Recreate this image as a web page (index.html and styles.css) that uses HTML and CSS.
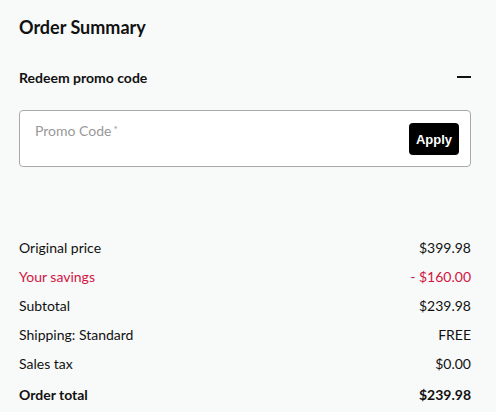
FILE: index.html
```html
<!DOCTYPE html>
<html>
<head>
<meta charset="utf-8">
<link rel="stylesheet" href="styles.css">
</head>
<body>
<div class="summary">
  <h2 class="title">Order Summary</h2>
  <div class="promo-head">
    <span class="promo-label">Redeem promo code</span>
    <span class="minus"></span>
  </div>
  <div class="promo-box">
    <span class="placeholder">Promo Code<span class="req">*</span></span>
    <button class="apply">Apply</button>
  </div>
  <div class="rows">
    <div class="row"><span>Original price</span><span>$399.98</span></div>
    <div class="row savings"><span>Your savings</span><span>- $160.00</span></div>
    <div class="row"><span>Subtotal</span><span>$239.98</span></div>
    <div class="row"><span>Shipping: Standard</span><span>FREE</span></div>
    <div class="row"><span>Sales tax</span><span>$0.00</span></div>
    <div class="row total"><span>Order total</span><span>$239.98</span></div>
  </div>
</div>
</body>
</html>
```
FILE: styles.css
```css
html, body {
  margin: 0;
  padding: 0;
  background: #f8f9f9;
}
body {
  font-family: "Lato", "Liberation Sans", sans-serif;
  color: #111;
}
.summary {
  padding: 16px 25px 0 19px;
}
.title {
  margin: 0;
  font-size: 18px;
  font-weight: 700;
  line-height: 22px;
}
.promo-head {
  display: flex;
  justify-content: space-between;
  align-items: center;
  margin-top: 28px;
  height: 22px;
}
.promo-label {
  font-size: 14px;
  font-weight: 700;
}
.minus {
  width: 14px;
  height: 2px;
  background: #111;
}
.promo-box {
  margin-top: 22px;
  height: 55px;
  border: 1px solid #aaa;
  border-radius: 4px;
  background: #fff;
  display: flex;
  justify-content: space-between;
  align-items: flex-start;
  padding: 0 11px 0 15px;
}
.placeholder {
  margin-top: 11px;
  font-size: 14px;
  color: #999;
}
.req {
  font-size: 10px;
  vertical-align: 3px;
  margin-left: 2px;
}
.apply {
  margin-top: 12px;
  width: 50px;
  height: 32px;
  background: #000;
  color: #fff;
  border: none;
  border-radius: 4px;
  font-family: "Liberation Sans", Arial, sans-serif;
  font-weight: 700;
  font-size: 13px;
  padding: 0;
}
.rows {
  margin-top: 72px;
  display: flex;
  flex-direction: column;
  gap: 11px;
}
.row {
  display: flex;
  justify-content: space-between;
  font-size: 14px;
  line-height: 18px;
}
.savings {
  color: #d21543;
}
.total {
  font-weight: 700;
  margin-top: 2px;
}
```
